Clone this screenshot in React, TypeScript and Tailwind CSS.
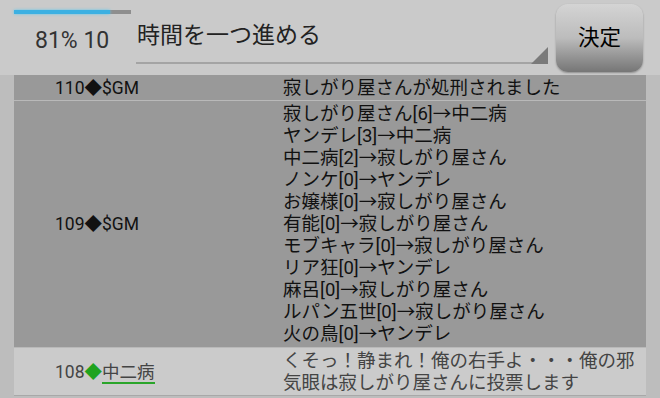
const font = { fontFamily: 'Roboto, "Noto Sans CJK JP", sans-serif' };

const votes = [
  "寂しがり屋さん[6]→中二病",
  "ヤンデレ[3]→中二病",
  "中二病[2]→寂しがり屋さん",
  "ノンケ[0]→ヤンデレ",
  "お嬢様[0]→寂しがり屋さん",
  "有能[0]→寂しがり屋さん",
  "モブキャラ[0]→寂しがり屋さん",
  "リア狂[0]→ヤンデレ",
  "麻呂[0]→寂しがり屋さん",
  "ルパン五世[0]→寂しがり屋さん",
  "火の鳥[0]→ヤンデレ",
];

function Row({
  left,
  children,
  className,
}: {
  left: React.ReactNode;
  children: React.ReactNode;
  className: string;
}) {
  return (
    <div className={`flex items-center ${className}`}>
      <div className="w-[269px] pl-[41px] text-[17.5px] leading-[22px]">{left}</div>
      <div className="flex-1 pr-[6px] text-[18.5px] leading-[22px]">{children}</div>
    </div>
  );
}

export default function App() {
  return (
    <div className="w-[660px] h-[398px] overflow-hidden bg-[#cacaca] text-[#111]" style={font}>
      <div className="flex h-[75px]">
        <div className="w-[122px] pl-[14px] pt-[10px]">
          <div className="flex h-[4px] w-[117px] bg-[#8e8e8e]">
            <div className="w-[96px] bg-[#3cb0e2] shadow-[0_0_3px_#5cc8f0]" />
          </div>
          <div className="mt-[12px] pl-[21px] text-[23px] leading-[30px] text-[#333]">81% 10</div>
        </div>
        <div className="relative ml-[14px] mr-[8px] flex-1">
          <div className="pt-[20px] pl-[1px] text-[23px] leading-[32px] text-[#222]">時間を一つ進める</div>
          <div className="absolute left-0 right-0 top-[62px] h-[2px] bg-[#a4a4a4]" />
          <svg className="absolute right-0 top-[47px]" width="17" height="17" viewBox="0 0 17 17">
            <polygon points="17,0 17,17 0,17" fill="#7a7a7a" />
          </svg>
        </div>
        <div className="mt-[4px] mr-[17px] flex h-[68px] w-[87px] items-center justify-center rounded-[12px] bg-gradient-to-b from-[#d4d4d4] via-[#bcbcbc] to-[#767676] text-[21.5px] text-black shadow-[0_1px_2px_rgba(0,0,0,0.3)]">
          決定
        </div>
      </div>
      <div className="bg-[#bdbdbd] px-[14px] pb-[2px]">
        <Row left="110◆$GM" className="h-[26px] bg-[#999] border-b border-[#b9b9b9]">
          寂しがり屋さんが処刑されました
        </Row>
        <Row left="109◆$GM" className="bg-[#999] py-[1px] border-b border-[#b9b9b9] h-[247px]">
          {votes.map((v) => (
            <div key={v}>{v}</div>
          ))}
        </Row>
        <Row
          left={
            <span className="text-[#444]">
              108<span className="text-[#1fa31f]">◆</span>
              <span className="border-b-2 border-[#2aa52a]">中二病</span>
            </span>
          }
          className="h-[48px] bg-[#cbcbcb] text-[#444] border-b border-[#a8a8a8]"
        >
          くそっ！静まれ！俺の右手よ・・・俺の邪気眼は寂しがり屋さんに投票します
        </Row>
      </div>
    </div>
  );
}
